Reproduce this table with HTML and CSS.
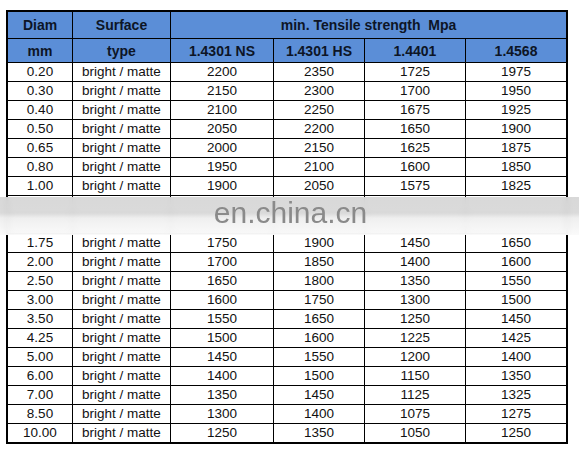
FILE: index.html
```html
<!DOCTYPE html>
<html>
<head>
<meta charset="utf-8">
<link rel="stylesheet" href="styles.css">
</head>
<body>
<div class="page">
  <table class="spec">
    <colgroup>
      <col class="c1"><col class="c2"><col class="c3"><col class="c4"><col class="c5"><col class="c6">
    </colgroup>
    <thead>
      <tr class="h1">
        <th>Diam</th><th>Surface</th><th colspan="4" class="last">min. Tensile strength&nbsp; Mpa</th>
      </tr>
      <tr class="h2">
        <th>mm</th><th>type</th><th>1.4301 NS</th><th>1.4301 HS</th><th>1.4401</th><th class="last">1.4568</th>
      </tr>
    </thead>
    <tbody>
      <tr><td>0.20</td><td>bright / matte</td><td>2200</td><td>2350</td><td>1725</td><td>1975</td></tr>
      <tr><td>0.30</td><td>bright / matte</td><td>2150</td><td>2300</td><td>1700</td><td>1950</td></tr>
      <tr><td>0.40</td><td>bright / matte</td><td>2100</td><td>2250</td><td>1675</td><td>1925</td></tr>
      <tr><td>0.50</td><td>bright / matte</td><td>2050</td><td>2200</td><td>1650</td><td>1900</td></tr>
      <tr><td>0.65</td><td>bright / matte</td><td>2000</td><td>2150</td><td>1625</td><td>1875</td></tr>
      <tr><td>0.80</td><td>bright / matte</td><td>1950</td><td>2100</td><td>1600</td><td>1850</td></tr>
      <tr><td>1.00</td><td>bright / matte</td><td>1900</td><td>2050</td><td>1575</td><td>1825</td></tr>
      <tr class="hidden-row"><td></td><td></td><td></td><td></td><td></td><td></td></tr>
      <tr class="hidden-row"><td></td><td></td><td></td><td></td><td></td><td></td></tr>
      <tr><td>1.75</td><td>bright / matte</td><td>1750</td><td>1900</td><td>1450</td><td>1650</td></tr>
      <tr><td>2.00</td><td>bright / matte</td><td>1700</td><td>1850</td><td>1400</td><td>1600</td></tr>
      <tr><td>2.50</td><td>bright / matte</td><td>1650</td><td>1800</td><td>1350</td><td>1550</td></tr>
      <tr><td>3.00</td><td>bright / matte</td><td>1600</td><td>1750</td><td>1300</td><td>1500</td></tr>
      <tr><td>3.50</td><td>bright / matte</td><td>1550</td><td>1650</td><td>1250</td><td>1450</td></tr>
      <tr><td>4.25</td><td>bright / matte</td><td>1500</td><td>1600</td><td>1225</td><td>1425</td></tr>
      <tr><td>5.00</td><td>bright / matte</td><td>1450</td><td>1550</td><td>1200</td><td>1400</td></tr>
      <tr><td>6.00</td><td>bright / matte</td><td>1400</td><td>1500</td><td>1150</td><td>1350</td></tr>
      <tr><td>7.00</td><td>bright / matte</td><td>1350</td><td>1450</td><td>1125</td><td>1325</td></tr>
      <tr><td>8.50</td><td>bright / matte</td><td>1300</td><td>1400</td><td>1075</td><td>1275</td></tr>
      <tr class="lastrow"><td>10.00</td><td>bright / matte</td><td>1250</td><td>1350</td><td>1050</td><td>1250</td></tr>
    </tbody>
  </table>
  <div class="watermark"><span class="wm-text">en.china.cn</span></div>
</div>
</body>
</html>
```

FILE: styles.css
```css
html, body {
  margin: 0;
  padding: 0;
  background: #ffffff;
}

.page {
  position: relative;
  width: 579px;
  height: 449px;
  padding: 10px 0 0 6px;
  box-sizing: border-box;
  font-family: "Liberation Sans", Arial, sans-serif;
}

.spec {
  border-collapse: separate;
  border-spacing: 0;
  table-layout: fixed;
  width: 562px;
  border: 2px solid #000;
  color: #111;
}

.c1 { width: 65px; }
.c2 { width: 98px; }
.c3 { width: 103px; }
.c4 { width: 91px; }
.c5 { width: 101px; }
.c6 { width: 100px; }

.spec th,
.spec td {
  padding: 0;
  text-align: center;
  border-right: 1px solid #000;
  border-bottom: 1px solid #000;
  white-space: nowrap;
  overflow: hidden;
}

.spec th.last,
.spec td:last-child {
  border-right: none;
}

.spec th {
  background: #5b8ed7;
  color: #0d1526;
  font-weight: bold;
  font-size: 14px;
}

.h1 th {
  height: 26px;
}

.h2 th {
  height: 23px;
}

.spec td {
  height: 18px;
  font-size: 13.5px;
  line-height: 18px;
}

.lastrow td {
  border-bottom: none;
}

.watermark {
  position: absolute;
  left: 0;
  top: 197px;
  width: 579px;
  height: 38px;
  background: linear-gradient(to bottom,
    rgba(214, 214, 214, 0.94) 0%,
    rgba(216, 216, 216, 0.94) 42%,
    rgba(238, 238, 238, 0.94) 55%,
    rgba(250, 250, 250, 0.94) 100%);
  backdrop-filter: blur(3px);
  display: flex;
  justify-content: center;
}

.wm-text {
  font-family: "Liberation Sans", Arial, sans-serif;
  font-size: 30px;
  line-height: 30px;
  color: #8a8a8a;
  margin-top: 1px;
  margin-left: 2px;
}
```
